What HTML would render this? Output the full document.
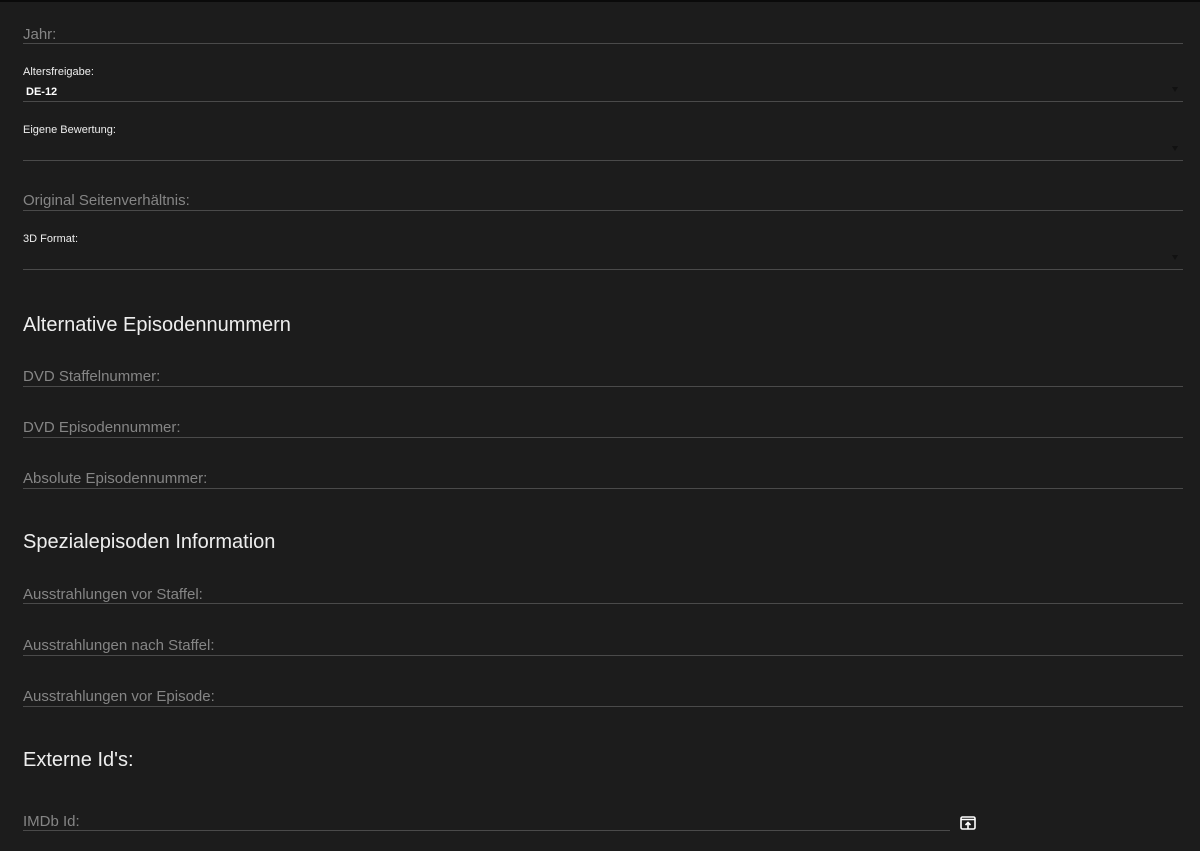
<!DOCTYPE html>
<html><head><meta charset="utf-8"><style>
body{margin:0;width:1200px;height:851px;background:#1c1c1c;font-family:"Liberation Sans",Roboto,sans-serif;overflow:hidden;position:relative;border-top:2px solid #0a0a0a;box-sizing:border-box}
.l{position:absolute;left:23px;height:1px;background:#4a4a4a;width:1160px}
.t{position:absolute;left:23px;color:#858585;font-size:15px;white-space:nowrap}
.s{position:absolute;left:23px;color:#eee;font-size:11px}
.v{position:absolute;left:26px;color:#fff;font-size:11px;font-weight:bold}
.h{position:absolute;left:23px;color:#eee;font-size:20px}
.a{position:absolute;left:1172px;width:0;height:0;border-left:3px solid transparent;border-right:3px solid transparent;border-top:5px solid #111}
</style></head><body>
<div class="t" style="top:24px">Jahr:</div><div class="l" style="top:41px"></div>
<div class="s" style="top:64px">Altersfreigabe:</div><div class="v" style="top:84px">DE-12</div><div class="a" style="top:85px"></div><div class="l" style="top:99px"></div>
<div class="s" style="top:122px">Eigene Bewertung:</div><div class="a" style="top:144px"></div><div class="l" style="top:158px"></div>
<div class="t" style="top:190px">Original Seitenverhältnis:</div><div class="l" style="top:208px"></div>
<div class="s" style="top:231px">3D Format:</div><div class="a" style="top:253px"></div><div class="l" style="top:267px"></div>
<div class="h" style="top:312px">Alternative Episodennummern</div>
<div class="t" style="top:366px">DVD Staffelnummer:</div><div class="l" style="top:384px"></div>
<div class="t" style="top:417px">DVD Episodennummer:</div><div class="l" style="top:435px"></div>
<div class="t" style="top:468px">Absolute Episodennummer:</div><div class="l" style="top:486px"></div>
<div class="h" style="top:529px">Spezialepisoden Information</div>
<div class="t" style="top:584px">Ausstrahlungen vor Staffel:</div><div class="l" style="top:601px"></div>
<div class="t" style="top:635px">Ausstrahlungen nach Staffel:</div><div class="l" style="top:653px"></div>
<div class="t" style="top:686px">Ausstrahlungen vor Episode:</div><div class="l" style="top:704px"></div>
<div class="h" style="top:747px">Externe Id's:</div>
<div class="t" style="top:811px">IMDb Id:</div><div class="l" style="top:828px;width:927px"></div>
<svg style="position:absolute;left:960px;top:814px" width="16" height="14" viewBox="0 0 16 14"><rect x="1" y="1" width="14" height="12" rx="1.5" fill="none" stroke="#fff" stroke-width="1.6"/><line x1="1" y1="3.5" x2="15" y2="3.5" stroke="#fff" stroke-width="1.5"/><path d="M8 13V6.5M5.5 9L8 6.5 10.5 9" fill="none" stroke="#fff" stroke-width="1.6"/></svg>
</body></html>
